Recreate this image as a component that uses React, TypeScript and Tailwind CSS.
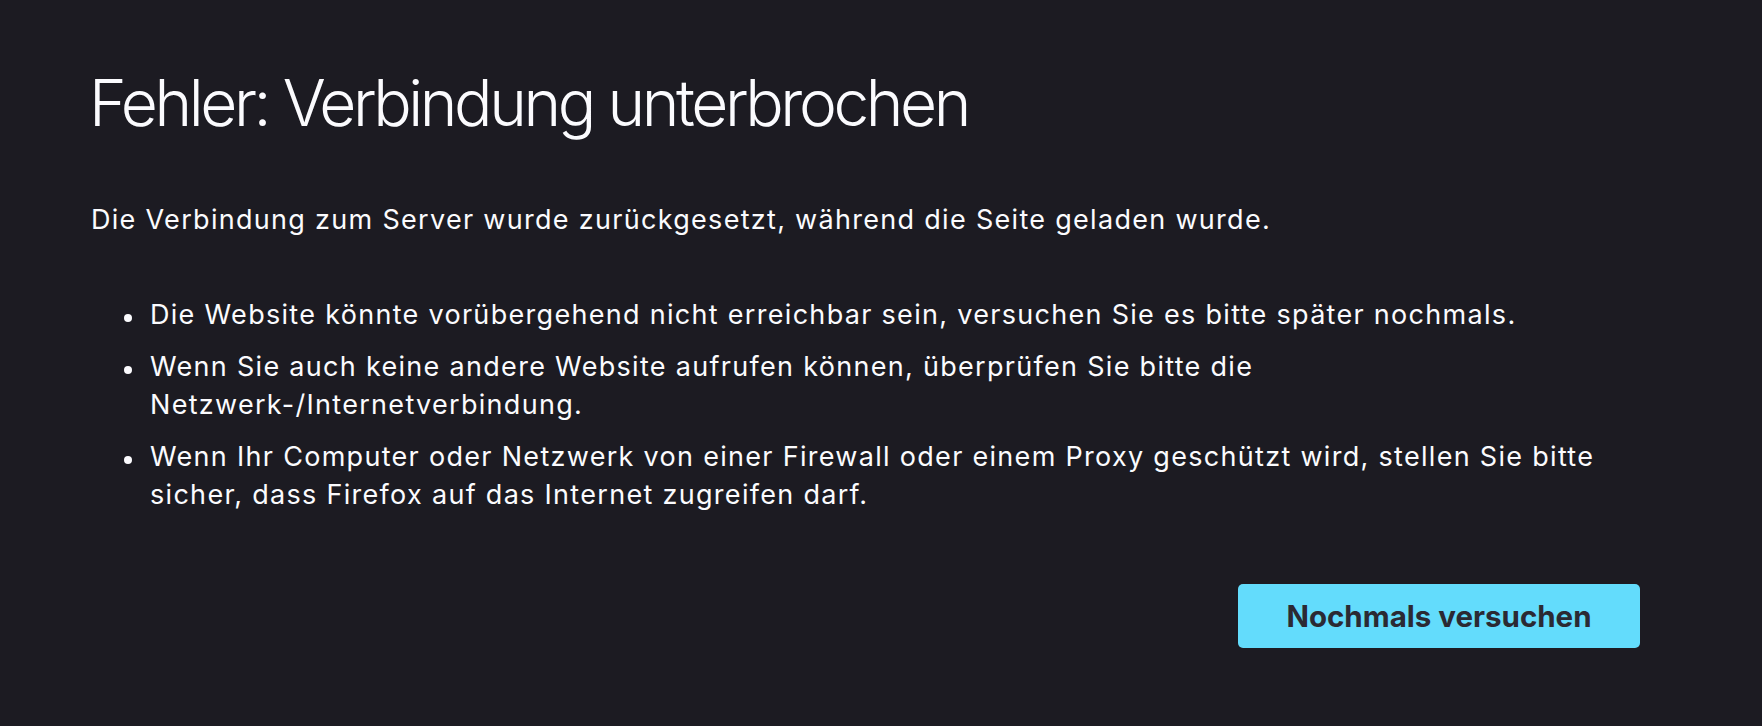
import React from "react";

const items: string[] = [
  "Die Website könnte vorübergehend nicht erreichbar sein, versuchen Sie es bitte später nochmals.",
  "Wenn Sie auch keine andere Website aufrufen können, überprüfen Sie bitte die Netzwerk-/Internetverbindung.",
  "Wenn Ihr Computer oder Netzwerk von einer Firewall oder einem Proxy geschützt wird, stellen Sie bitte sicher, dass Firefox auf das Internet zugreifen darf.",
];

export default function App() {
  return (
    <div
      className="w-full h-[726px] bg-[#1c1b22] text-[#fbfbfe] overflow-hidden"
      style={{ fontFamily: "Inter, 'Noto Sans', 'Liberation Sans', sans-serif" }}
    >
      <div className="ml-[91px] w-[1549px] pt-[63px] flex flex-col">
        <h1 className="-ml-[2px] text-[64px] leading-[80px] font-light tracking-[-3.4px]">
          Fehler: Verbindung unterbrochen
        </h1>
        <p className="mt-[58px] text-[27px] leading-[37px] tracking-[1.3px]">
          Die Verbindung zum Server wurde zurückgesetzt, während die Seite geladen wurde.
        </p>
        <ul className="mt-[58px] flex flex-col gap-[14px] pl-[33px]">
          {items.map((t) => (
            <li key={t} className="flex items-start text-[27px] leading-[38px] tracking-[1.3px]">
              <span className="mt-[18px] w-[8px] h-[8px] rounded-full bg-[#fbfbfe] shrink-0" />
              <span className="ml-[18px]">{t}</span>
            </li>
          ))}
        </ul>
        <div className="mt-[70px] flex justify-end">
          <button className="h-[64px] w-[402px] rounded-[5px] bg-[#63dcfc] text-[#2b2a33] text-[29.5px] font-bold">
            Nochmals versuchen
          </button>
        </div>
      </div>
    </div>
  );
}
